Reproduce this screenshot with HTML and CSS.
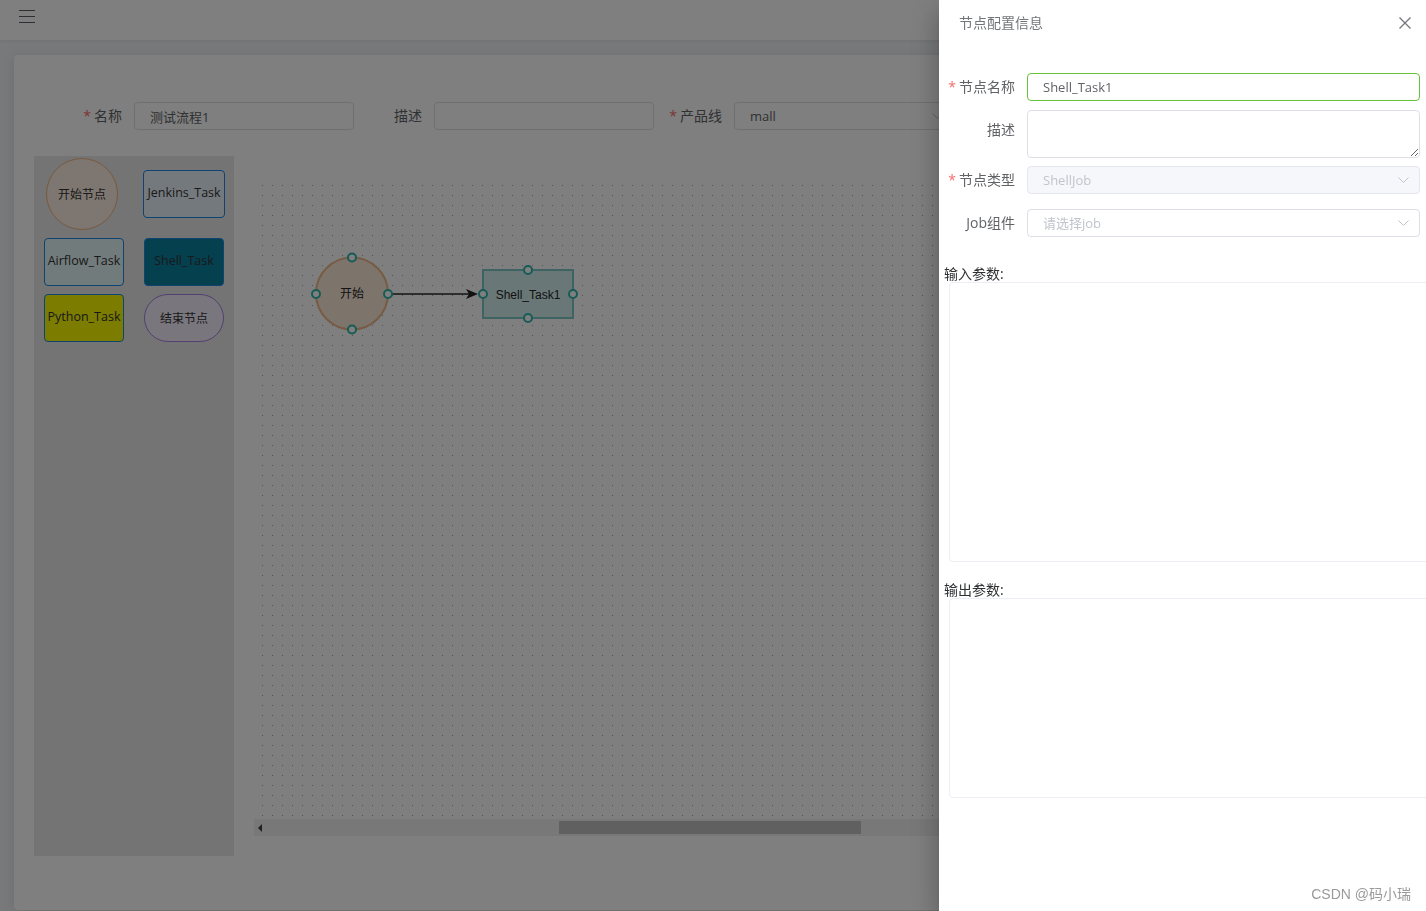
FILE: index.html
```html
<html>
  <head>
    <meta charset="utf-8" />
    <title>流程设计</title>
    <link rel="stylesheet" href="styles.css">
  </head>
  <body>
    <header class="navbar">
      <div class="hamburger">
        <svg width="16" height="14" viewBox="0 0 16 14">
          <path d="M0 1.5h16M0 7.5h16M0 13.5h16" stroke="#5a5e66" stroke-width="1" />
        </svg>
      </div>
    </header>

    <main class="app-main">
      <div class="card">
        <form class="flow-form">
          <div class="form-item">
            <label class="form-label required">名称</label>
            <div class="input"><input type="text" value="测试流程1" /></div>
          </div>
          <div class="form-item">
            <label class="form-label">描述</label>
            <div class="input"><input type="text" /></div>
          </div>
          <div class="form-item">
            <label class="form-label required">产品线</label>
            <div class="input select">
              <input type="text" value="mall" readonly />
              <svg class="arrow" width="11" height="6" viewBox="0 0 11 6">
                <path d="M0.5 0.5L5.5 5.5L10.5 0.5" fill="none" stroke="#c0c4cc" />
              </svg>
            </div>
          </div>
        </form>

        <div class="designer">
          <aside class="palette">
            <div class="stencil start">开始节点</div>
            <div class="stencil jenkins">Jenkins_Task</div>
            <div class="stencil airflow">Airflow_Task</div>
            <div class="stencil shell">Shell_Task</div>
            <div class="stencil python">Python_Task</div>
            <div class="stencil end">结束节点</div>
          </aside>

          <div class="canvas">
            <svg class="graph">
              <defs>
                <pattern id="dots" x="8" y="29" width="10" height="10" patternUnits="userSpaceOnUse">
                  <rect width="1" height="1" fill="#a4a4a4" />
                </pattern>
              </defs>
              <rect x="8" y="29" width="100%" height="631" fill="url(#dots)" />

              <g class="node start-node">
                <circle cx="98" cy="137.5" r="36" />
                <text x="98" y="138">开始</text>
              </g>

              <path class="edge" d="M138 138H216" />
              <path class="edge-head" d="M224 138L212 133L215 138L212 143Z" />

              <g class="node task-node">
                <rect x="229" y="114" width="90" height="48" />
                <text x="274" y="138.5">Shell_Task1</text>
              </g>

              <g class="ports">
                <circle cx="98" cy="101.5" r="4" />
                <circle cx="98" cy="173.5" r="4" />
                <circle cx="62" cy="138" r="4" />
                <circle cx="134" cy="138" r="4" />
                <circle cx="274" cy="114" r="4" />
                <circle cx="274" cy="162" r="4" />
                <circle cx="229" cy="138" r="4" />
                <circle cx="319" cy="138" r="4" />
              </g>
            </svg>
            <div class="hscroll">
              <span class="scroll-arrow"></span>
              <span class="scroll-thumb"></span>
            </div>
          </div>
        </div>
      </div>
    </main>

    <div class="mask"></div>

    <div class="drawer">
      <div class="drawer-header">
        <span class="drawer-title">节点配置信息</span>
        <span class="drawer-close">
          <svg width="12" height="12" viewBox="0 0 12 12">
            <path d="M0.5 0.5L11.5 11.5M11.5 0.5L0.5 11.5" stroke="#72767b" stroke-width="1.3" />
          </svg>
        </span>
      </div>

      <div class="drawer-body">
        <form class="node-form">
          <div class="form-item row-name">
            <label class="form-label required">节点名称</label>
            <div class="input success"><input type="text" value="Shell_Task1" /></div>
          </div>
          <div class="form-item row-desc">
            <label class="form-label">描述</label>
            <div class="input area"><textarea></textarea></div>
          </div>
          <div class="form-item row-type">
            <label class="form-label required">节点类型</label>
            <div class="input select disabled">
              <input type="text" value="ShellJob" disabled />
              <svg class="arrow" width="11" height="6" viewBox="0 0 11 6">
                <path d="M0.5 0.5L5.5 5.5L10.5 0.5" fill="none" stroke="#c0c4cc" />
              </svg>
            </div>
          </div>
          <div class="form-item row-job">
            <label class="form-label">Job组件</label>
            <div class="input select">
              <input type="text" placeholder="请选择job" readonly />
              <svg class="arrow" width="11" height="6" viewBox="0 0 11 6">
                <path d="M0.5 0.5L5.5 5.5L10.5 0.5" fill="none" stroke="#c0c4cc" />
              </svg>
            </div>
          </div>
        </form>

        <div class="param-title">输入参数:</div>
        <div class="param-box input-params"></div>
        <div class="param-title">输出参数:</div>
        <div class="param-box output-params"></div>
      </div>
    </div>

    <div class="watermark">CSDN @码小瑞</div>
  </body>
</html>
```

FILE: styles.css
```css
html,
body {
  margin: 0;
  height: 100%;
}

body {
  font: 14px "Open Sans", "Noto Sans CJK SC", sans-serif;
  color: #606266;
  background: #f0f2f5;
  overflow: hidden;
}

/* top bar */
.navbar {
  position: relative;
  z-index: 1;
  height: 40px;
  background: #fff;
  box-shadow: 0 1px 4px rgba(0, 21, 41, 0.08);
}
.hamburger {
  display: inline-block;
  padding: 9px 19px 0;
}
.hamburger svg {
  display: block;
}

/* page */
.app-main {
  padding: 15px 14px 0;
}
.card {
  height: 855px;
  box-sizing: border-box;
  padding: 20px;
  background: #fff;
  border-radius: 4px;
  box-shadow: 0 2px 12px 0 rgba(0, 0, 0, 0.1);
}

.flow-form {
  display: flex;
  margin: 0;
  padding: 27px 0 0 20px;
  margin-bottom: 26px;
}
.form-item {
  display: flex;
}
.form-label {
  width: 80px;
  flex-shrink: 0;
  box-sizing: border-box;
  padding-right: 12px;
  text-align: right;
  line-height: 28px;
  font-size: 14px;
  color: #606266;
  white-space: nowrap;
}
.required::before {
  content: "*";
  color: #f56c6c;
  margin-right: 3px;
}
.input {
  width: 220px;
  height: 28px;
  box-sizing: border-box;
  padding: 0 15px;
  display: flex;
  align-items: center;
  background: #fff;
  border: 1px solid #dcdfe6;
  border-radius: 4px;
}
.input input {
  flex: 1;
  min-width: 0;
  height: 26px;
  padding: 0;
  border: 0;
  outline: 0;
  background: transparent;
  font: 13px "Open Sans", "Noto Sans CJK SC", sans-serif;
  color: #606266;
}
.input input::placeholder {
  color: #c0c4cc;
}
.input.select {
  padding-right: 10px;
}
.input .arrow {
  flex-shrink: 0;
  display: block;
}
.input.success {
  border-color: #67c23a;
}
.input.disabled {
  background: #f5f7fa;
  border-color: #e4e7ed;
}
.input.disabled input {
  color: #c0c4cc;
}
.input.area {
  height: 48px;
  padding: 0;
}
.input textarea {
  width: 100%;
  height: 100%;
  box-sizing: border-box;
  padding: 5px 15px;
  border: 0;
  border-radius: 4px;
  outline: 0;
  resize: vertical;
  font: 13px "Open Sans", "Noto Sans CJK SC", sans-serif;
  color: #606266;
  background: transparent;
}

/* designer */
.designer {
  display: flex;
}
.palette {
  width: 200px;
  height: 700px;
  flex-shrink: 0;
  box-sizing: border-box;
  padding: 2px 10px;
  background: #e8e8e8;
  display: grid;
  grid-template-columns: 80px 80px;
  grid-template-rows: 72px 48px 48px;
  column-gap: 20px;
  row-gap: 8px;
  align-content: start;
  align-items: center;
  justify-items: center;
}
.stencil {
  width: 80px;
  height: 48px;
  box-sizing: border-box;
  padding-bottom: 4px;
  display: flex;
  align-items: center;
  justify-content: center;
  font-size: 12.5px;
  color: #333;
  white-space: nowrap;
  border: 1px solid #1e88e5;
  border-radius: 4px;
}
.stencil.start {
  width: 72px;
  height: 72px;
  margin-right: 4px;
  padding-bottom: 0;
  font-size: 12px;
  border-radius: 50%;
  border-color: #f0b27a;
  background: #fdeee2;
}
.stencil.jenkins {
  width: 82px;
  background: #e9f3fb;
}
.stencil.airflow {
  background: #e4f6f6;
}
.stencil.shell {
  background: #0b809f;
}
.stencil.python {
  background: #f8f800;
}
.stencil.end {
  padding-bottom: 0;
  font-size: 12px;
  border-radius: 24px;
  border-color: #a77fe0;
  background: #f3edfc;
}

.canvas {
  flex: 1;
  min-width: 0;
  height: 680px;
  margin-left: 20px;
  display: flex;
  flex-direction: column;
}
.graph {
  flex: 1;
  width: 100%;
  display: block;
}
.graph text {
  font: 12px "Liberation Sans", "Noto Sans CJK SC", sans-serif;
  fill: #262626;
  text-anchor: middle;
  dominant-baseline: central;
}
.start-node circle {
  fill: #fbe8d8;
  stroke: #eeb889;
  stroke-width: 2;
}
.task-node rect {
  fill: #d3efee;
  stroke: #7fc7c4;
  stroke-width: 2;
}
.edge {
  stroke: #262626;
  stroke-width: 1.5;
  fill: none;
}
.edge-head {
  fill: #262626;
}
.ports circle {
  fill: #fff;
  stroke: #2db7aa;
  stroke-width: 2;
}

.hscroll {
  height: 17px;
  flex-shrink: 0;
  display: flex;
  align-items: center;
  background: #f1f1f1;
}
.scroll-arrow {
  width: 0;
  height: 0;
  margin-left: 4px;
  border-top: 4px solid transparent;
  border-bottom: 4px solid transparent;
  border-right: 4px solid #404040;
}
.scroll-thumb {
  width: 302px;
  height: 13px;
  margin-left: 297px;
  background: #c1c1c1;
}

/* drawer */
.mask {
  position: fixed;
  z-index: 10;
  top: 0;
  left: 0;
  right: 0;
  bottom: 0;
  background: rgba(0, 0, 0, 0.5);
}
.drawer {
  position: fixed;
  z-index: 11;
  top: 0;
  right: 0;
  bottom: 0;
  width: 487px;
  overflow: hidden;
  background: #fff;
  box-shadow: 0 8px 10px -5px rgba(0, 0, 0, 0.2), 0 16px 24px 2px rgba(0, 0, 0, 0.14),
    0 6px 30px 5px rgba(0, 0, 0, 0.12);
}
.drawer-header {
  display: flex;
  justify-content: space-between;
  align-items: center;
  height: 16px;
  padding: 15px 15px 0 20px;
  color: #72767b;
  font-size: 14px;
  line-height: 16px;
}
.drawer-close svg {
  display: block;
}
.drawer-body {
  padding: 42px 6px 0 5px;
}
.node-form {
  margin: 0 0 0 3px;
}
.node-form .input {
  width: auto;
  flex: 1;
}
.row-name {
  margin-bottom: 9px;
}
.row-desc {
  margin-bottom: 8px;
}
.row-desc .form-label {
  padding-top: 6px;
}
.row-type {
  margin-bottom: 15px;
}
.row-job {
  margin-bottom: 29px;
}
.param-title {
  line-height: 16px;
  font-size: 14px;
  color: #303133;
}
.param-box {
  width: 520px;
  box-sizing: border-box;
  margin-left: 5px;
  border: 1px solid #ebeef5;
  border-radius: 4px;
}
.param-box.input-params {
  height: 280px;
  margin-bottom: 20px;
}
.param-box.output-params {
  height: 200px;
}

.watermark {
  position: fixed;
  z-index: 12;
  right: 15px;
  bottom: 8px;
  font: 14px "Liberation Sans", "Noto Sans CJK SC", sans-serif;
  line-height: 18px;
  color: #9a9a9a;
}
```
